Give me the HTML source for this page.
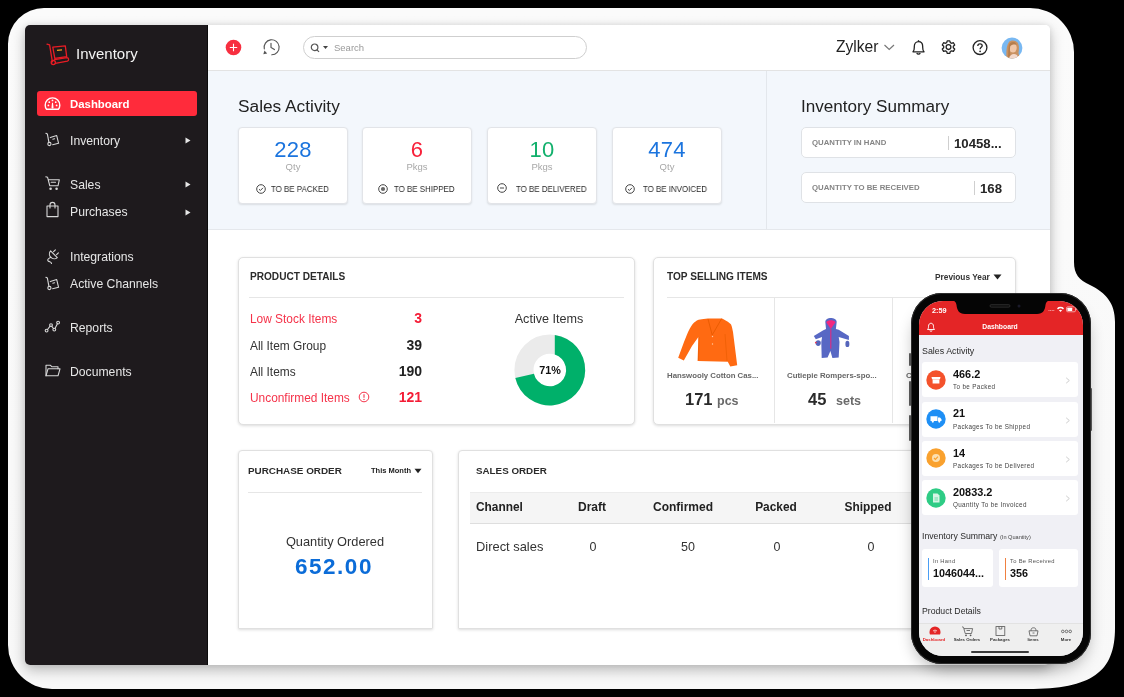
<!DOCTYPE html>
<html><head><meta charset="utf-8">
<style>
*{margin:0;padding:0;box-sizing:border-box}
html,body{width:1124px;height:697px;overflow:hidden;background:#000;font-family:"Liberation Sans",sans-serif;position:relative}
.a{position:absolute}
.t{position:absolute;white-space:nowrap;line-height:1;will-change:transform}
</style></head><body>

<svg class="a" style="left:0px;top:0px" width="1124" height="697" viewBox="0 0 1124 697">
<defs>
<linearGradient id="fg" x1="0" y1="0" x2="0" y2="1">
<stop offset="0" stop-color="#fbfbfb"/><stop offset="1" stop-color="#f8f8f8"/></linearGradient>
</defs>
<path d="M44 8 H1030 A44 44 0 0 1 1074 52 V262 C1074 274 1079 280 1090 285 C1106 293 1115 303 1115 322 V628 C1115 672 1092 689 1028 689 H52 A44 44 0 0 1 8 645 V44 A36 36 0 0 1 44 8 Z" fill="url(#fg)"/>
</svg>
<div class="a" style="left:25px;top:25px;width:1024.5px;height:640px;background:#fff;border-radius:5px;box-shadow:0 5px 14px rgba(0,0,0,.26),0 0 6px rgba(0,0,0,.08)"></div>
<div class="a" style="left:25px;top:25px;width:183px;height:640px;background:#1e1a1d;border-radius:5px 0 0 5px;border-right:1px solid #0b0b0b"></div>
<svg class="a" style="left:44px;top:41px" width="28" height="27" viewBox="0 0 28 27">
<g fill="none" stroke="#e81c24" stroke-width="1.3" stroke-linecap="round" stroke-linejoin="round">
<path d="M3 3.2 L5.6 3.9 L8.4 20.9"/>
<circle cx="9.3" cy="21.6" r="2.1"/>
<path d="M8.8 6.2 L21.3 4.9 L22.7 15.6 L10.8 17.3 Z"/>
<path d="M11.3 22.3 L23.4 20.1 A1.8 1.8 0 0 0 22.9 16.6 L10.5 18.6"/>
</g>
<path d="M13 9.3 L18 8.8" stroke="#f0a020" stroke-width="1.3"/>
</svg>
<div class="t" style="top:46.00px;font-size:15px;color:#f4f4f4;left:76px;">Inventory</div>
<div class="a" style="left:37px;top:91px;width:160px;height:25px;background:#ff2b3b;border-radius:3px"></div>
<svg class="a" style="left:44px;top:96px" width="17" height="15" viewBox="0 0 17 15">
<g fill="none" stroke="#fff" stroke-width="1.4">
<path d="M2.6 13.3 C1.6 12 1.2 10.6 1.2 9.2 A7.3 7.3 0 0 1 15.8 9.2 C15.8 10.6 15.4 12 14.4 13.3 Z" stroke-linejoin="round"/>
</g>
<g fill="#fff"><circle cx="8.5" cy="4.4" r=".9"/><circle cx="5.3" cy="6.2" r=".9"/><circle cx="11.7" cy="6.2" r=".9"/>
<circle cx="4.4" cy="9.4" r=".9"/><circle cx="12.6" cy="9.4" r=".9"/>
<path d="M8 6.8 H9 L9.5 11.5 A1 1 0 0 1 7.5 11.5 Z"/></g>
</svg>
<div class="t" style="top:99.00px;font-size:11.4px;color:#fff;font-weight:700;left:69.5px;">Dashboard</div>
<div class="t" style="top:135.00px;font-size:12.2px;color:#e6e6e6;left:69.5px;">Inventory</div>
<div class="t" style="top:179.00px;font-size:12.2px;color:#e6e6e6;left:69.5px;">Sales</div>
<div class="t" style="top:206.00px;font-size:12.2px;color:#e6e6e6;left:69.5px;">Purchases</div>
<div class="t" style="top:251.00px;font-size:12.2px;color:#e6e6e6;left:69.5px;">Integrations</div>
<div class="t" style="top:278.00px;font-size:12.2px;color:#e6e6e6;left:69.5px;">Active Channels</div>
<div class="t" style="top:322.00px;font-size:12.2px;color:#e6e6e6;left:69.5px;">Reports</div>
<div class="t" style="top:366.00px;font-size:12.2px;color:#e6e6e6;left:69.5px;">Documents</div>
<svg class="a" style="left:185px;top:137px" width="6" height="7" viewBox="0 0 6 7"><path d="M0.5 0.5 L5.5 3.5 L0.5 6.5 Z" fill="#e6e6e6"/></svg>
<svg class="a" style="left:185px;top:181px" width="6" height="7" viewBox="0 0 6 7"><path d="M0.5 0.5 L5.5 3.5 L0.5 6.5 Z" fill="#e6e6e6"/></svg>
<svg class="a" style="left:185px;top:209px" width="6" height="7" viewBox="0 0 6 7"><path d="M0.5 0.5 L5.5 3.5 L0.5 6.5 Z" fill="#e6e6e6"/></svg>
<svg class="a" style="left:44px;top:131px" width="17" height="17" viewBox="0 0 17 17"><g fill="none" stroke="#d8d8d8" stroke-width="1.1" stroke-linecap="round" stroke-linejoin="round"><path d="M1.9 2.3 L3.4 3.1 L4.9 11.3"/><circle cx="5.4" cy="13" r="1.6"/>
<path d="M6.3 6.6 L12.7 4.6 L14.6 12.3 L8.6 13.7"/><path d="M8.8 8.2 L10.6 7.7"/></g></svg>
<svg class="a" style="left:44px;top:175px" width="17" height="17" viewBox="0 0 17 17"><g fill="none" stroke="#d8d8d8" stroke-width="1.1" stroke-linecap="round" stroke-linejoin="round"><path d="M1.8 1.8 L3.6 2.3 L5.8 10.8 H14 L15.3 4.8 H4.5"/><path d="M7.2 7.3 H11.5"/></g>
<g fill="#d8d8d8"><circle cx="6.6" cy="13.8" r="1.3"/><circle cx="12.6" cy="13.8" r="1.3"/></g></svg>
<svg class="a" style="left:44px;top:201px" width="17" height="17" viewBox="0 0 17 17"><g fill="none" stroke="#d8d8d8" stroke-width="1.1" stroke-linecap="round" stroke-linejoin="round"><path d="M3 5 H14 V15.6 H3 Z"/><path d="M6 7 V3.9 A2.5 2.5 0 0 1 11 3.9 V7"/></g></svg>
<svg class="a" style="left:44px;top:247px" width="17" height="17" viewBox="0 0 17 17"><g fill="none" stroke="#d8d8d8" stroke-width="1.1" stroke-linecap="round" stroke-linejoin="round"><path d="M6.6 3.9 L13.3 10.6 A4.75 4.75 0 0 1 6.6 3.9 Z"/><path d="M9.6 4.6 L11.4 2.8 M12.6 7.6 L14.4 5.8"/>
<path d="M7 10.2 C4.5 11.2 3 12.8 4.2 14 C5.5 15.2 7.8 14.6 7.5 17"/></g></svg>
<svg class="a" style="left:44px;top:275px" width="17" height="17" viewBox="0 0 17 17"><g fill="none" stroke="#d8d8d8" stroke-width="1.1" stroke-linecap="round" stroke-linejoin="round"><path d="M1.9 2.3 L3.4 3.1 L4.9 11.3"/><circle cx="5.4" cy="13" r="1.6"/>
<path d="M6.3 6.6 L12.7 4.6 L14.6 12.3 L8.6 13.7"/><path d="M8.8 8.2 L10.6 7.7"/></g></svg>
<svg class="a" style="left:44px;top:319px" width="17" height="17" viewBox="0 0 17 17"><g fill="none" stroke="#d8d8d8" stroke-width="1.1" stroke-linecap="round" stroke-linejoin="round"><circle cx="2.6" cy="11.6" r="1.4"/><circle cx="7" cy="6.1" r="1.4"/><circle cx="10.3" cy="10.6" r="1.4"/><circle cx="14.1" cy="3.6" r="1.4"/>
<path d="M3.5 10.5 L6.1 7.2 M7.8 7.3 L9.5 9.5 M11 9.4 L13.4 4.8"/></g></svg>
<svg class="a" style="left:44px;top:362px" width="17" height="17" viewBox="0 0 17 17"><g fill="none" stroke="#d8d8d8" stroke-width="1.1" stroke-linecap="round" stroke-linejoin="round"><path d="M2 13.8 V3.3 H6.5 L8 4.8 H14 V6.8"/><path d="M2 13.8 L4 6.8 H16 L14 13.8 Z"/></g></svg>
<div class="a" style="left:208px;top:25px;width:841.5px;height:46px;background:#fff;border-bottom:1px solid #e3e3e3;border-radius:0 5px 0 0"></div>
<svg class="a" style="left:225px;top:39px" width="17" height="17" viewBox="0 0 17 17"><circle cx="8.5" cy="8.5" r="7.8" fill="#f72f40"/><path d="M8.5 4.8 V12.2 M4.8 8.5 H12.2" stroke="#fff" stroke-width="1.1"/></svg>
<svg class="a" style="left:262px;top:38px" width="19" height="19" viewBox="0 0 19 19"><g fill="none" stroke="#555" stroke-width="1.15" stroke-linecap="round">
<path d="M2.3 10.9 A7.5 7.5 0 1 1 9.8 16.8"/><path d="M9 5.3 V9.4 L12.4 11.6"/></g>
<path d="M1.3 16.3 L5.2 15.6 L2.5 12.4 Z" fill="#555"/></svg>
<div class="a" style="left:303px;top:36px;width:284px;height:23px;border:1px solid #cfcfcf;border-radius:12px;background:#fff"></div>
<svg class="a" style="left:310px;top:43px" width="20" height="10" viewBox="0 0 20 10"><g fill="none" stroke="#555" stroke-width="1.2"><circle cx="4.6" cy="4.3" r="3.3"/><path d="M7 6.8 L9 8.8"/></g>
<path d="M13 3 H18 L15.5 6 Z" fill="#444"/></svg>
<div class="t" style="top:43.00px;font-size:9.5px;color:#9a9a9a;left:334px;">Search</div>
<div class="t" style="top:39.00px;font-size:15.6px;color:#222;left:835.8px;">Zylker</div>
<svg class="a" style="left:883px;top:43px" width="13" height="8" viewBox="0 0 13 8"><path d="M1.5 2 L6.2 6.5 L11 2" fill="none" stroke="#777" stroke-width="1.2"/></svg>
<svg class="a" style="left:910px;top:39px" width="17" height="17" viewBox="0 0 17 17"><g fill="none" stroke="#222" stroke-width="1.3" stroke-linejoin="round">
<path d="M3 12.8 C4.5 11.5 4.3 10 4.3 7.5 C4.3 4.5 6.2 2.6 8.5 2.6 C10.8 2.6 12.7 4.5 12.7 7.5 C12.7 10 12.5 11.5 14 12.8 Z"/>
<path d="M6.8 14 A1.8 1.8 0 0 0 10.2 14"/><path d="M8.5 1.2 V2.4"/></g></svg>
<svg class="a" style="left:940px;top:39px" width="17" height="17" viewBox="0 0 17 17"><g fill="none" stroke="#222" stroke-width="1.3" stroke-linejoin="round">
<path d="M7.2 1.8 H9.8 L10.3 3.6 L11.6 4.3 L13.4 3.7 L14.7 6 L13.3 7.3 V8.8 L14.7 10.1 L13.4 12.4 L11.6 11.8 L10.3 12.5 L9.8 14.4 H7.2 L6.7 12.5 L5.4 11.8 L3.6 12.4 L2.3 10.1 L3.7 8.8 V7.3 L2.3 6 L3.6 3.7 L5.4 4.3 L6.7 3.6 Z"/>
<circle cx="8.5" cy="8.1" r="2.4"/></g></svg>
<svg class="a" style="left:971px;top:39px" width="18" height="18" viewBox="0 0 18 18"><circle cx="9" cy="8.6" r="6.9" fill="none" stroke="#222" stroke-width="1.3"/>
<path d="M6.8 6.9 C6.8 5.5 7.8 4.8 9 4.8 C10.3 4.8 11.2 5.6 11.2 6.7 C11.2 8.2 9.1 8.4 9.1 10.2" fill="none" stroke="#222" stroke-width="1.3"/>
<circle cx="9.1" cy="12.3" r=".85" fill="#222"/></svg>
<svg class="a" style="left:1001px;top:37px" width="22" height="22" viewBox="0 0 22 22"><defs><clipPath id="av"><circle cx="11" cy="11" r="10.4"/></clipPath></defs>
<circle cx="11" cy="11" r="10.4" fill="#78b8f2"/>
<g clip-path="url(#av)">
<path d="M5.5 22 C5 15 5.5 8 8 5 C10 2.8 14.5 3 16.5 5.5 C18.5 8 18 13 17.5 16 C18 18 18.5 20 18 22 Z" fill="#c99262"/>
<ellipse cx="12" cy="10.8" rx="3.7" ry="4.8" fill="#f1c7a8"/>
<path d="M7.5 11 C7.5 7 9 5 12 5 C14.5 5 15.8 6.5 15.5 8 C13.5 7.2 10.5 7.5 9.2 9.5 C8.8 12 8.8 16 9.5 19 L7 20 Z" fill="#b57d4c"/>
<path d="M8 22 C8.5 18.5 10.5 17 13 17 C15.5 17 17 18.5 17.5 22 Z" fill="#f3d9cc"/>
</g></svg>
<div class="a" style="left:208px;top:71px;width:841.5px;height:159px;background:#f3f7fc;border-bottom:1px solid #e5e8ec"></div>
<div class="a" style="left:766px;top:71px;width:1px;height:158px;background:#e3e7ec"></div>
<div class="t" style="top:98.00px;font-size:17.3px;color:#222;left:237.8px;">Sales Activity</div>
<div class="a" style="left:237.8px;top:127px;width:110px;height:76.5px;background:#fff;border:1px solid #e2e4e8;border-radius:4px;box-shadow:0 1px 2px rgba(0,0,0,.10)"></div>
<div class="t" style="top:139.00px;font-size:22px;color:#1b74de;letter-spacing:0.3px;left:142.8px;width:300px;text-align:center;">228</div>
<div class="t" style="top:162.00px;font-size:9.5px;color:#a8a8a8;left:142.8px;width:300px;text-align:center;">Qty</div>
<div class="a" style="left:362.4px;top:127px;width:110px;height:76.5px;background:#fff;border:1px solid #e2e4e8;border-radius:4px;box-shadow:0 1px 2px rgba(0,0,0,.10)"></div>
<div class="t" style="top:139.00px;font-size:22px;color:#f8213a;letter-spacing:0.3px;left:267.4px;width:300px;text-align:center;">6</div>
<div class="t" style="top:162.00px;font-size:9.5px;color:#a8a8a8;left:267.4px;width:300px;text-align:center;">Pkgs</div>
<div class="a" style="left:487.2px;top:127px;width:110px;height:76.5px;background:#fff;border:1px solid #e2e4e8;border-radius:4px;box-shadow:0 1px 2px rgba(0,0,0,.10)"></div>
<div class="t" style="top:139.00px;font-size:22px;color:#12b06c;letter-spacing:0.3px;left:392.20000000000005px;width:300px;text-align:center;">10</div>
<div class="t" style="top:162.00px;font-size:9.5px;color:#a8a8a8;left:392.20000000000005px;width:300px;text-align:center;">Pkgs</div>
<div class="a" style="left:612.1px;top:127px;width:110px;height:76.5px;background:#fff;border:1px solid #e2e4e8;border-radius:4px;box-shadow:0 1px 2px rgba(0,0,0,.10)"></div>
<div class="t" style="top:139.00px;font-size:22px;color:#1b74de;letter-spacing:0.3px;left:517.1px;width:300px;text-align:center;">474</div>
<div class="t" style="top:162.00px;font-size:9.5px;color:#a8a8a8;left:517.1px;width:300px;text-align:center;">Qty</div>
<div class="t" style="top:185.00px;font-size:9.0px;color:#2a2a2a;left:270.7px;transform:scaleX(0.88);transform-origin:0 0;">TO BE PACKED</div>
<div class="t" style="top:185.00px;font-size:9.0px;color:#2a2a2a;left:394.3px;transform:scaleX(0.88);transform-origin:0 0;">TO BE SHIPPED</div>
<div class="t" style="top:185.00px;font-size:9.0px;color:#2a2a2a;left:515.6px;transform:scaleX(0.88);transform-origin:0 0;">TO BE DELIVERED</div>
<div class="t" style="top:185.00px;font-size:9.0px;color:#2a2a2a;left:643px;transform:scaleX(0.88);transform-origin:0 0;">TO BE INVOICED</div>
<svg class="a" style="left:255.5px;top:183.5px" width="10" height="10" viewBox="0 0 10 10"><circle cx="5" cy="5" r="4.3" fill="none" stroke="#444" stroke-width="1"/><path d="M3 5.2 L4.4 6.5 L7 3.8" fill="none" stroke="#444" stroke-width="1"/></svg>
<svg class="a" style="left:378.2px;top:183.5px" width="10" height="10" viewBox="0 0 10 10"><circle cx="5" cy="5" r="4.3" fill="none" stroke="#444" stroke-width="1"/><circle cx="5" cy="5" r="2.1" fill="#666"/></svg>
<svg class="a" style="left:497.2px;top:183.0px" width="10" height="10" viewBox="0 0 10 10"><circle cx="5" cy="5" r="4.3" fill="none" stroke="#444" stroke-width="1"/><path d="M3 5 H7" stroke="#444" stroke-width="1"/></svg>
<svg class="a" style="left:625px;top:183.5px" width="10" height="10" viewBox="0 0 10 10"><circle cx="5" cy="5" r="4.3" fill="none" stroke="#444" stroke-width="1"/><path d="M3 5.2 L4.4 6.5 L7 3.8" fill="none" stroke="#444" stroke-width="1"/></svg>
<div class="t" style="top:98.00px;font-size:17.1px;color:#222;left:801.1px;">Inventory Summary</div>
<div class="a" style="left:801px;top:127px;width:215px;height:31px;background:#fff;border:1px solid #dfe2e6;border-radius:5px"></div>
<div class="t" style="top:139.00px;font-size:7.8px;color:#858585;font-weight:700;left:811.8px;">QUANTITY IN HAND</div>
<div class="a" style="left:947.5px;top:136px;width:1px;height:14px;background:#cfcfcf"></div>
<div class="t" style="top:137.00px;font-size:13.2px;color:#262626;font-weight:700;left:953.5px;">10458...</div>
<div class="a" style="left:801px;top:172px;width:215px;height:31px;background:#fff;border:1px solid #dfe2e6;border-radius:5px"></div>
<div class="t" style="top:184.00px;font-size:7.8px;color:#858585;font-weight:700;left:811.8px;">QUANTITY TO BE RECEIVED</div>
<div class="a" style="left:973.8px;top:181px;width:1px;height:14px;background:#cfcfcf"></div>
<div class="t" style="top:182.00px;font-size:13.2px;color:#262626;font-weight:700;left:980px;">168</div>
<div class="a" style="left:237.5px;top:256.5px;width:397.5px;height:168px;background:#fff;border:1px solid #e0e0e0;border-radius:5px;box-shadow:0 1px 3px rgba(0,0,0,.14)"></div>
<div class="t" style="top:272.00px;font-size:10.1px;color:#2b2b2b;font-weight:700;left:250.2px;">PRODUCT DETAILS</div>
<div class="a" style="left:248.5px;top:297px;width:375px;height:1px;background:#e6e6e6"></div>
<div class="t" style="top:314.00px;font-size:11.9px;color:#f5334a;left:250.2px;">Low Stock Items</div>
<div class="t" style="top:341.00px;font-size:11.9px;color:#333;left:250.2px;">All Item Group</div>
<div class="t" style="top:367.00px;font-size:11.9px;color:#333;left:250.2px;">All Items</div>
<div class="t" style="top:393.00px;font-size:11.9px;color:#f5334a;left:250.2px;">Unconfirmed Items</div>
<svg class="a" style="left:357.5px;top:391px" width="12" height="12" viewBox="0 0 12 12"><circle cx="6" cy="6" r="4.8" fill="none" stroke="#f5334a" stroke-width="1"/><path d="M6 3.3 V6.7" stroke="#f5334a" stroke-width="1.1"/><circle cx="6" cy="8.4" r=".65" fill="#f5334a"/></svg>
<div class="t" style="top:311.00px;font-size:14px;color:#f41c36;font-weight:700;left:122.19999999999999px;width:300px;text-align:right;">3</div>
<div class="t" style="top:338.00px;font-size:14px;color:#222;font-weight:700;left:122.19999999999999px;width:300px;text-align:right;">39</div>
<div class="t" style="top:364.00px;font-size:14px;color:#222;font-weight:700;left:122.19999999999999px;width:300px;text-align:right;">190</div>
<div class="t" style="top:390.00px;font-size:14px;color:#f41c36;font-weight:700;left:122.19999999999999px;width:300px;text-align:right;">121</div>
<div class="t" style="top:313.00px;font-size:12.6px;color:#333;left:398.70000000000005px;width:300px;text-align:center;">Active Items</div>
<svg class="a" style="left:0px;top:0px" width="1124" height="697" viewBox="0 0 1124 697"><circle cx="549.8" cy="370.0" r="25.85" fill="none" stroke="#ebebeb" stroke-width="19.099999999999998"/>
<path d="M554.8 334.95 A35.4 35.4 0 1 1 515.31 377.96 L533.92 373.67 A16.3 16.3 0 1 0 554.8 354.49 Z" fill="#00b06a"/></svg>
<div class="t" style="top:365.00px;font-size:10.8px;color:#111;font-weight:700;left:399.79999999999995px;width:300px;text-align:center;">71%</div>
<div class="a" style="left:653px;top:256.5px;width:362.5px;height:168px;background:#fff;border:1px solid #e0e0e0;border-radius:5px;box-shadow:0 1px 3px rgba(0,0,0,.14)"></div>
<div class="t" style="top:272.00px;font-size:10.1px;color:#2b2b2b;font-weight:700;left:667px;">TOP SELLING ITEMS</div>
<div class="t" style="top:273.00px;font-size:8.3px;color:#333;font-weight:700;left:934.5px;">Previous Year</div>
<svg class="a" style="left:993px;top:274px" width="9" height="6" viewBox="0 0 9 6"><path d="M0.5 0.5 H8.5 L4.5 5.5 Z" fill="#222"/></svg>
<div class="a" style="left:667px;top:297px;width:348px;height:1px;background:#e6e6e6"></div>
<div class="a" style="left:773.5px;top:297px;width:1px;height:126px;background:#e6e6e6"></div>
<div class="a" style="left:891.5px;top:297px;width:1px;height:126px;background:#e6e6e6"></div>
<svg class="a" style="left:670px;top:310px" width="80" height="60" viewBox="0 0 80 60"><path d="M37.9 8.6 C32 9 27 10 25.9 11.2 C21 14 18 22 14 32 L8.2 47.8 L13.8 50.4 L22 36 L28.4 27 L27.6 50.9 L57.8 51.7 L60.3 56.5 L67.2 55.2 L63 22 C62 16 61 14 60.3 13.8 C57 11 54 9.5 51.7 8.6 Z" fill="#ff6a12"/>
<path d="M38 9 L42.2 25 L51.7 8.6" fill="none" stroke="#e85a00" stroke-width=".9"/>
<path d="M29 27 L28.5 50 M55 24 L57 51" stroke="#e85a00" stroke-width=".6"/>
<circle cx="42.5" cy="26.5" r=".7" fill="#ffc9a0"/><circle cx="42.5" cy="34" r=".7" fill="#ffc9a0"/></svg>
<div class="t" style="top:372.00px;font-size:7.8px;color:#666;font-weight:700;left:667px;">Hanswooly Cotton Cas...</div>
<div class="t" style="top:391.00px;font-size:16.5px;color:#2a2a2a;font-weight:700;left:685.1px;">171</div>
<div class="t" style="top:395.00px;font-size:12.5px;color:#6a6a6a;font-weight:700;left:716.9px;">pcs</div>
<svg class="a" style="left:800px;top:310px" width="60" height="55" viewBox="0 0 60 55"><path d="M25.3 11.8 C25.5 9 28 7.9 30.8 7.9 C33.6 7.9 36.5 9 36.7 11.8 L35.9 19 L38.7 19.7 L48.9 26 L48.9 30 L38.7 27 L39.5 32 L38.7 47.4 L32.4 48.1 L30.4 41 L27.6 47.4 L21.7 48.1 L21.3 32 L22.1 27 L15.8 29.2 L13.8 26 L22.9 20.5 L26 19 Z" fill="#5868c4"/>
<path d="M26.2 12.3 C27 10.8 29 10.3 30.8 10.3 C32.6 10.3 34.8 10.8 35.5 12.3 L30.8 19 Z" fill="#f2287f"/>
<path d="M30.8 19 V38.7" stroke="#e02a80" stroke-width="1.1"/>
<ellipse cx="18.2" cy="33.1" rx="2.6" ry="2.8" fill="#5565bb"/><ellipse cx="47.4" cy="33.9" rx="2" ry="3.2" fill="#5565bb"/>
<circle cx="15.8" cy="32.6" r=".9" fill="#f03a50"/></svg>
<div class="t" style="top:372.00px;font-size:7.8px;color:#666;font-weight:700;left:786.5px;">Cutiepie Rompers-spo...</div>
<div class="t" style="top:391.00px;font-size:16.5px;color:#2a2a2a;font-weight:700;left:808.2px;">45</div>
<div class="t" style="top:395.00px;font-size:12.5px;color:#6a6a6a;font-weight:700;left:835.5px;">sets</div>
<div class="a" style="left:237.5px;top:450.2px;width:195px;height:178.5px;background:#fff;border:1px solid #e0e0e0;border-radius:5px;box-shadow:0 1px 3px rgba(0,0,0,.14);border-radius:4px 4px 1px 1px"></div>
<div class="t" style="top:466.00px;font-size:9.9px;color:#2b2b2b;font-weight:700;left:247.8px;">PURCHASE ORDER</div>
<div class="t" style="top:467.00px;font-size:7.5px;color:#222;font-weight:700;left:370.7px;">This Month</div>
<svg class="a" style="left:414px;top:468px" width="8" height="6" viewBox="0 0 8 6"><path d="M0.5 0.8 H7.5 L4 5.2 Z" fill="#222"/></svg>
<div class="a" style="left:247.8px;top:491.5px;width:174px;height:1px;background:#e6e6e6"></div>
<div class="t" style="top:536.00px;font-size:12.8px;color:#333;left:185px;width:300px;text-align:center;">Quantity Ordered</div>
<div class="t" style="top:556.00px;font-size:22.5px;color:#0b6cd8;font-weight:700;letter-spacing:1.5px;left:184px;width:300px;text-align:center;">652.00</div>
<div class="a" style="left:458px;top:450.2px;width:560px;height:178.5px;background:#fff;border:1px solid #e0e0e0;border-radius:5px;box-shadow:0 1px 3px rgba(0,0,0,.14);border-radius:4px 4px 1px 1px"></div>
<div class="t" style="top:466.00px;font-size:9.8px;color:#2b2b2b;font-weight:700;left:475.8px;">SALES ORDER</div>
<div class="a" style="left:470px;top:491.7px;width:560px;height:32px;background:#f5f5f5;border-bottom:1px solid #dedede;border-top:1px solid #ececec"></div>
<div class="t" style="top:502.00px;font-size:11.9px;color:#222;font-weight:700;left:475.8px;">Channel</div>
<div class="t" style="top:501.00px;font-size:12px;color:#222;font-weight:700;left:442.4px;width:300px;text-align:center;">Draft</div>
<div class="t" style="top:501.00px;font-size:12px;color:#222;font-weight:700;left:533.3px;width:300px;text-align:center;">Confirmed</div>
<div class="t" style="top:502.00px;font-size:11.9px;color:#222;font-weight:700;left:626.0px;width:300px;text-align:center;">Packed</div>
<div class="t" style="top:502.00px;font-size:11.9px;color:#222;font-weight:700;left:717.6px;width:300px;text-align:center;">Shipped</div>
<div class="t" style="top:541.00px;font-size:12.9px;color:#333;left:475.8px;">Direct sales</div>
<div class="t" style="top:541.00px;font-size:12.5px;color:#333;left:442.6px;width:300px;text-align:center;">0</div>
<div class="t" style="top:541.00px;font-size:12.5px;color:#333;left:537.7px;width:300px;text-align:center;">50</div>
<div class="t" style="top:541.00px;font-size:12.5px;color:#333;left:627.3px;width:300px;text-align:center;">0</div>
<div class="t" style="top:541.00px;font-size:12.5px;color:#333;left:720.9px;width:300px;text-align:center;">0</div>
<div class="t" style="top:372.00px;font-size:8.0px;color:#666;font-weight:700;left:906px;">Cotton</div>
<div class="a" style="left:914px;top:300px;width:174px;height:362px;border-radius:31px;box-shadow:0 7px 16px rgba(0,0,0,.30)"></div>
<div class="a" style="left:908.6px;top:352.6px;width:2.2px;height:13px;background:#555;border-radius:1px"></div>
<div class="a" style="left:908.6px;top:380.5px;width:2.2px;height:25px;background:#555;border-radius:1px"></div>
<div class="a" style="left:908.6px;top:415px;width:2.2px;height:26px;background:#555;border-radius:1px"></div>
<div class="a" style="left:1090px;top:388px;width:2.2px;height:43px;background:#555;border-radius:1px"></div>
<div class="a" style="left:911px;top:293px;width:179.5px;height:370.5px;background:#050505;border-radius:31px;box-shadow:inset 0 0 0 1px #2c2c2c"></div>
<div class="a" style="left:919px;top:301px;width:163.5px;height:355px;border-radius:24px;overflow:hidden;background:#f0f0f5">
<div class="a" style="left:0px;top:0px;width:164px;height:34.1px;background:#e42526"></div>
<svg class="a" style="left:31px;top:-1px" width="102" height="15" viewBox="0 0 102 15"><path d="M0 0 H102 C99 0 96 1 95.5 5 C95 10 93 14 87 14 H15 C9 14 7 10 6.5 5 C6 1 3 0 0 0 Z" fill="#050505"/><rect x="40" y="4.6" width="20" height="2.6" rx="1.3" fill="#111" stroke="#3a3a3a" stroke-width=".6"/><circle cx="69" cy="5.9" r="1.5" fill="#1a1a2a"/></svg>
<div class="t" style="top:6.00px;font-size:7.3px;color:#fff;font-weight:700;left:12.7px;">2:59</div>
<svg class="a" style="left:129px;top:4px" width="30" height="9" viewBox="0 0 30 9"><g fill="#f5b5b5"><circle cx="1" cy="5.5" r=".55"/><circle cx="2.6" cy="5.5" r=".55"/><circle cx="4.2" cy="5.5" r=".55"/><circle cx="5.8" cy="5.5" r=".55"/></g>
<path d="M9 3.3 A5 5 0 0 1 16 3.3 L15 4.4 A3.6 3.6 0 0 0 10 4.4 Z M10.9 5.3 A2.6 2.6 0 0 1 14.1 5.3 L12.5 7 Z" fill="#fff"/>
<rect x="18.5" y="1.8" width="9" height="5" rx="1.3" fill="none" stroke="#fbd0d0" stroke-width=".7"/><rect x="19.4" y="2.7" width="4.8" height="3.2" rx=".5" fill="#fff"/><path d="M28.3 3.6 V5" stroke="#fbd0d0" stroke-width=".7"/></svg>
<svg class="a" style="left:7px;top:20.5px" width="10" height="10" viewBox="0 0 10 10"><path d="M1.5 7.5 C2.5 6.5 2.5 5.5 2.5 4.2 C2.5 2.4 3.6 1.2 5 1.2 C6.4 1.2 7.5 2.4 7.5 4.2 C7.5 5.5 7.5 6.5 8.5 7.5 Z M4 8.4 A1 1 0 0 0 6 8.4" fill="none" stroke="#fff" stroke-width=".9"/></svg>
<div class="t" style="top:23.00px;font-size:6.8px;color:#fff;font-weight:700;left:-68.9px;width:300px;text-align:center;">Dashboard</div>
<div class="t" style="top:46.00px;font-size:8.9px;color:#2a2a2a;left:3.1px;">Sales Activity</div>
<div class="a" style="left:3.1px;top:61.2px;width:156px;height:35.2px;background:#fff;border-radius:3px"></div>
<svg class="a" style="left:7px;top:68.7px" width="20" height="20" viewBox="0 0 20 20"><circle cx="10" cy="10" r="9.7" fill="#f4522c"/><path d="M5.5 7 H14.5 L14 9.2 H6 Z M6.6 9.6 H13.4 V13.5 H6.6 Z" fill="#fff"/></svg>
<div class="t" style="top:68.00px;font-size:10.9px;color:#111;font-weight:700;left:33.9px;">466.2</div>
<div class="t" style="top:83.00px;font-size:6.3px;color:#444;letter-spacing:0.35px;left:33.9px;">To be Packed</div>
<svg class="a" style="left:146px;top:76.2px" width="6" height="7" viewBox="0 0 6 7"><path d="M1.2 0.8 L4.3 3.5 L1.2 6.2" fill="none" stroke="#c8c8c8" stroke-width=".9"/></svg>
<div class="a" style="left:3.1px;top:100.5px;width:156px;height:35.2px;background:#fff;border-radius:3px"></div>
<svg class="a" style="left:7px;top:108.0px" width="20" height="20" viewBox="0 0 20 20"><circle cx="10" cy="10" r="9.7" fill="#1e8ff5"/><path d="M4.5 7.2 H11.5 V12 H4.5 Z M12 8.6 H14 L15.5 10.3 V12 H12 Z" fill="#fff"/><circle cx="6.8" cy="12.6" r="1.1" fill="#fff"/><circle cx="13.3" cy="12.6" r="1.1" fill="#fff"/></svg>
<div class="t" style="top:107.00px;font-size:10.9px;color:#111;font-weight:700;left:33.9px;">21</div>
<div class="t" style="top:123.00px;font-size:6.3px;color:#444;letter-spacing:0.35px;left:33.9px;">Packages To be Shipped</div>
<svg class="a" style="left:146px;top:115.5px" width="6" height="7" viewBox="0 0 6 7"><path d="M1.2 0.8 L4.3 3.5 L1.2 6.2" fill="none" stroke="#c8c8c8" stroke-width=".9"/></svg>
<div class="a" style="left:3.1px;top:139.8px;width:156px;height:35.2px;background:#fff;border-radius:3px"></div>
<svg class="a" style="left:7px;top:147.3px" width="20" height="20" viewBox="0 0 20 20"><circle cx="10" cy="10" r="9.7" fill="#f9a12e"/><circle cx="10" cy="10" r="4" fill="#fce0b0"/><path d="M8 10 L9.4 11.4 L12 8.7" fill="none" stroke="#f9a12e" stroke-width="1.2"/></svg>
<div class="t" style="top:147.00px;font-size:10.9px;color:#111;font-weight:700;left:33.9px;">14</div>
<div class="t" style="top:162.00px;font-size:6.3px;color:#444;letter-spacing:0.35px;left:33.9px;">Packages To be Delivered</div>
<svg class="a" style="left:146px;top:154.8px" width="6" height="7" viewBox="0 0 6 7"><path d="M1.2 0.8 L4.3 3.5 L1.2 6.2" fill="none" stroke="#c8c8c8" stroke-width=".9"/></svg>
<div class="a" style="left:3.1px;top:179.1px;width:156px;height:35.2px;background:#fff;border-radius:3px"></div>
<svg class="a" style="left:7px;top:186.6px" width="20" height="20" viewBox="0 0 20 20"><circle cx="10" cy="10" r="9.7" fill="#2ecc85"/><path d="M7 5.5 H11.5 L13.5 7.5 V14.5 H7 Z" fill="#d5f5e5"/><path d="M8.5 10 H12 M8.5 12 H12" stroke="#2ecc85" stroke-width=".6"/></svg>
<div class="t" style="top:186.00px;font-size:10.9px;color:#111;font-weight:700;left:33.9px;">20833.2</div>
<div class="t" style="top:201.00px;font-size:6.3px;color:#444;letter-spacing:0.35px;left:33.9px;">Quantity To be Invoiced</div>
<svg class="a" style="left:146px;top:194.1px" width="6" height="7" viewBox="0 0 6 7"><path d="M1.2 0.8 L4.3 3.5 L1.2 6.2" fill="none" stroke="#c8c8c8" stroke-width=".9"/></svg>
<div class="t" style="top:231.00px;font-size:8.7px;color:#2a2a2a;left:2.9px;">Inventory Summary</div>
<div class="t" style="top:234.00px;font-size:5.6px;color:#444;left:80.9px;">(In Quantity)</div>
<div class="a" style="left:2.9px;top:248.4px;width:71.1px;height:38.1px;background:#fff;border-radius:3px"></div>
<div class="a" style="left:80px;top:248.4px;width:78.9px;height:38.1px;background:#fff;border-radius:3px"></div>
<div class="a" style="left:9px;top:256.5px;width:1.2px;height:22px;background:#4a9ef5"></div>
<div class="a" style="left:86.3px;top:256.5px;width:1.2px;height:22px;background:#f08040"></div>
<div class="t" style="top:258.00px;font-size:5.8px;color:#555;letter-spacing:0.3px;left:13.9px;">In Hand</div>
<div class="t" style="top:258.00px;font-size:5.8px;color:#555;letter-spacing:0.3px;left:91.2px;">To Be Received</div>
<div class="t" style="top:267.00px;font-size:10.8px;color:#111;font-weight:700;left:13.9px;">1046044...</div>
<div class="t" style="top:267.00px;font-size:10.8px;color:#111;font-weight:700;left:91.2px;">356</div>
<div class="t" style="top:306.00px;font-size:8.7px;color:#2a2a2a;left:3.2px;">Product Details</div>
<div class="a" style="left:0px;top:322.3px;width:164px;height:40px;background:#efefef;border-top:1px solid #e2e2e2"></div>
<svg class="a" style="left:10px;top:325px" width="12" height="10" viewBox="0 0 12 10"><path d="M1 8.4 C0.6 7.6 0.5 6.8 0.5 6 A5.5 5.5 0 0 1 11.5 6 C11.5 6.8 11.4 7.6 11 8.4 Z" fill="#e42526"/><path d="M4 5 L6 4 L8 5 M6 4.8 V7" stroke="#fff" stroke-width=".7" fill="none"/></svg>
<svg class="a" style="left:42px;top:324.5px" width="13" height="11" viewBox="0 0 13 11"><g fill="none" stroke="#555" stroke-width=".8"><path d="M1 0.8 L2.5 1.3 L4.2 7.5 H10.5 L11.6 2.6 H3"/><path d="M5.5 4.5 H9"/></g><circle cx="5" cy="9.3" r=".9" fill="#555"/><circle cx="9.6" cy="9.3" r=".9" fill="#555"/></svg>
<svg class="a" style="left:76px;top:325px" width="11" height="10" viewBox="0 0 11 10"><rect x="1" y="0.6" width="8.8" height="8.8" fill="none" stroke="#555" stroke-width=".8"/><path d="M4 0.6 V3 H6.8 V0.6" fill="none" stroke="#555" stroke-width=".8"/></svg>
<svg class="a" style="left:108.5px;top:325.5px" width="11" height="10" viewBox="0 0 11 10"><path d="M1 3.8 H10 L9 8.8 H2 Z M3 3.8 C3 1.3 4 0.8 5.5 0.8 C7 0.8 8 1.3 8 3.8 M4.5 6 H6.5" fill="none" stroke="#555" stroke-width=".8"/></svg>
<svg class="a" style="left:141.5px;top:327.5px" width="11" height="5" viewBox="0 0 11 5"><g fill="none" stroke="#555" stroke-width=".8"><circle cx="1.8" cy="2.4" r="1.3"/><circle cx="5.5" cy="2.4" r="1.3"/><circle cx="9.2" cy="2.4" r="1.3"/></g></svg>
<div class="t" style="top:337.00px;font-size:4.3px;color:#e42526;font-weight:700;left:-134.6px;width:300px;text-align:center;">Dashboard</div>
<div class="t" style="top:337.00px;font-size:4.3px;color:#333;font-weight:700;left:-101.7px;width:300px;text-align:center;">Sales Orders</div>
<div class="t" style="top:337.00px;font-size:4.3px;color:#333;font-weight:700;left:-69px;width:300px;text-align:center;">Packages</div>
<div class="t" style="top:337.00px;font-size:4.3px;color:#333;font-weight:700;left:-36.400000000000006px;width:300px;text-align:center;">Items</div>
<div class="t" style="top:337.00px;font-size:4.3px;color:#333;font-weight:700;left:-3.5px;width:300px;text-align:center;">More</div>
<div class="a" style="left:52px;top:350px;width:58px;height:2.4px;background:#3a3a3a;border-radius:1.2px"></div>
</div>
</body></html>
